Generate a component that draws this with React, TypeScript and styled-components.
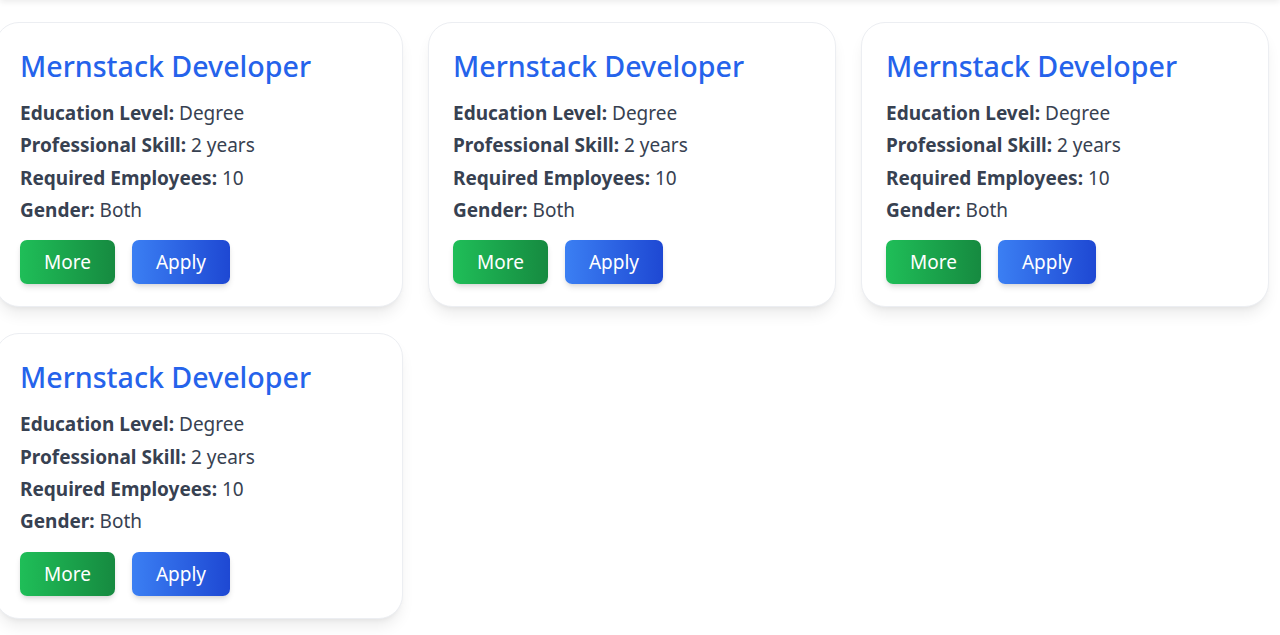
import React, { useEffect } from "react";
import styled, { createGlobalStyle } from "styled-components";

const GlobalStyle = createGlobalStyle`
  html {
    overflow-y: scroll;
  }
  html::-webkit-scrollbar {
    width: 12px;
    background: #f1f1f1;
  }
  html::-webkit-scrollbar-thumb {
    background: #c1c1c1;
    border: 2px solid #f1f1f1;
    border-width: 0 1px 0 2px;
  }
  body {
    margin: 0;
    background: #ffffff;
    font-family: "Segoe UI", "Noto Sans", "Open Sans", sans-serif;
    color: #374151;
  }
  * { box-sizing: border-box; }
`;

const Banner = styled.header`
  height: 655px;
  background: #ffffff;
  box-shadow: 0 2px 6px rgba(0, 0, 0, 0.08);
  position: relative;
`;

const Section = styled.main`
  padding: 22px 0 40px;
  overflow: hidden;
`;

const Grid = styled.div`
  display: grid;
  grid-template-columns: repeat(3, 408px);
  column-gap: 25px;
  row-gap: 26px;
  margin-left: -5px;
`;

const Card = styled.article`
  background: #ffffff;
  border: 1px solid #eceef2;
  border-radius: 24px;
  padding: 23px 24px 22px 24px;
  box-shadow: 0 10px 15px -3px rgba(0, 0, 0, 0.08), 0 4px 6px -4px rgba(0, 0, 0, 0.08);
`;

const Title = styled.h2`
  margin: 0 0 13px;
  font-size: 28.6px;
  line-height: 40px;
  font-weight: 500;
  color: #2563eb;
`;

const Info = styled.div`
  display: flex;
  flex-direction: column;
  gap: 4px;
`;

const Line = styled.p`
  margin: 0;
  font-size: 19px;
  line-height: 28.33px;
  color: #374151;
`;

const Label = styled.strong`
  font-weight: 700;
`;

const Actions = styled.div`
  display: flex;
  gap: 17px;
  margin-top: 16px;
`;

const Button = styled.button<{ $variant: "green" | "blue" }>`
  border: none;
  border-radius: 7px;
  padding: 8px 24px;
  font-family: inherit;
  font-size: 19px;
  line-height: 28px;
  color: #ffffff;
  cursor: pointer;
  background: ${(p) =>
    p.$variant === "green"
      ? "linear-gradient(to right, #1fbe58, #168a40)"
      : "linear-gradient(to right, #3b7ff3, #1e48d3)"};
  box-shadow: 0 4px 6px -1px rgba(0, 0, 0, 0.12), 0 2px 4px -2px rgba(0, 0, 0, 0.1);
`;

const Footer = styled.footer`
  min-height: 1190px;
`;

type Job = {
  title: string;
  education: string;
  skill: string;
  employees: number;
  gender: string;
};

const jobs: Job[] = Array.from({ length: 4 }, () => ({
  title: "Mernstack Developer",
  education: "Degree",
  skill: "2 years",
  employees: 10,
  gender: "Both",
}));

export default function App() {
  useEffect(() => {
    window.scrollTo(0, 655);
  }, []);

  return (
    <>
      <GlobalStyle />
      <Banner />
      <Section>
        <Grid>
          {jobs.map((job, i) => (
            <Card key={i}>
              <Title>{job.title}</Title>
              <Info>
                <Line>
                  <Label>Education Level:</Label> {job.education}
                </Line>
                <Line>
                  <Label>Professional Skill:</Label> {job.skill}
                </Line>
                <Line>
                  <Label>Required Employees:</Label> {job.employees}
                </Line>
                <Line>
                  <Label>Gender:</Label> {job.gender}
                </Line>
              </Info>
              <Actions>
                <Button $variant="green">More</Button>
                <Button $variant="blue">Apply</Button>
              </Actions>
            </Card>
          ))}
        </Grid>
      </Section>
      <Footer />
    </>
  );
}
